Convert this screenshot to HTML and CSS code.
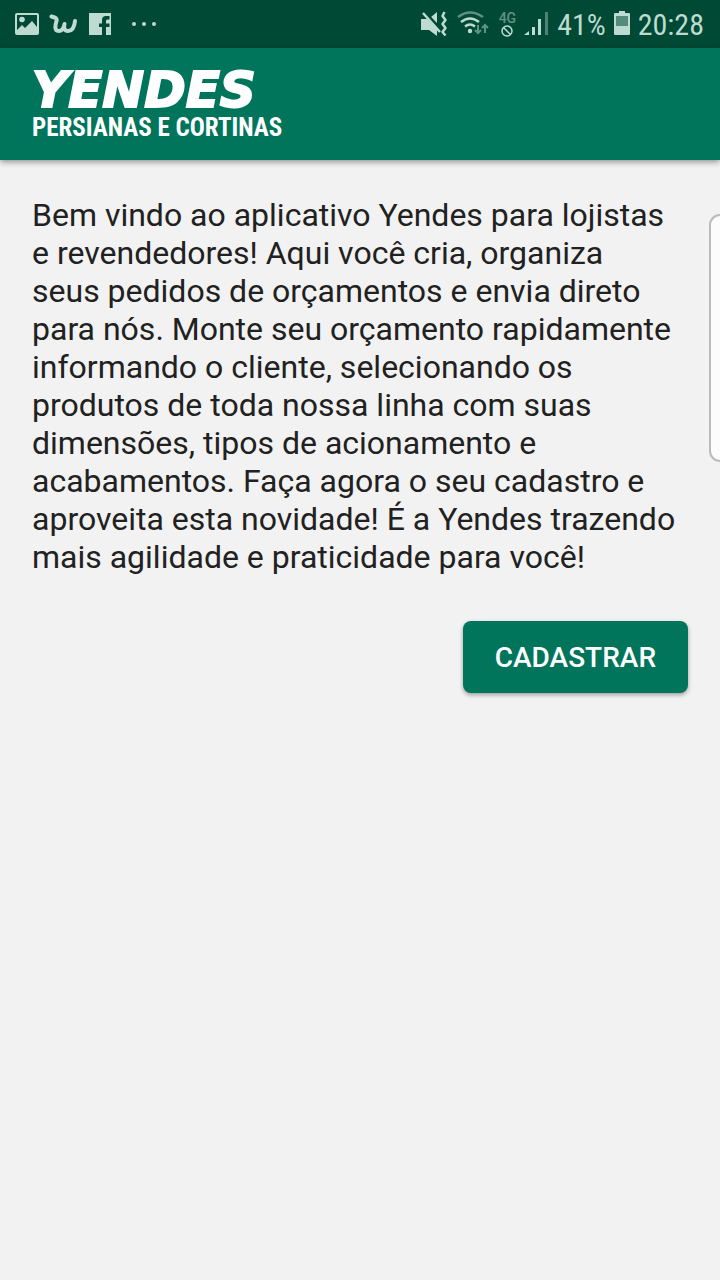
FILE: index.html
```html
<!DOCTYPE html>
<html lang="pt-BR">
<head>
<meta charset="utf-8">
<meta name="viewport" content="width=device-width, initial-scale=1">
<title>Yendes Persianas e Cortinas</title>
<link rel="stylesheet" href="styles.css">
</head>
<body>
<div class="status">
  <div class="notices">
    <svg width="24" height="24" viewBox="0 0 24 24" aria-hidden="true"><path fill="currentColor" fill-rule="evenodd" d="M2 1h20a2 2 0 0 1 2 2v18a2 2 0 0 1-2 2H2a2 2 0 0 1-2-2V3a2 2 0 0 1 2-2zM2 3v15l5-5 3 3 7-7 5 6V3z"/><circle cx="7" cy="7.500" r="2.800" fill="currentColor"/></svg>
    <svg width="30" height="24" viewBox="0 0 30 24" aria-hidden="true"><path d="M2.500 4.500c3 1 6 1 5 4.500-1.500 5-2 10 2 10 4 0 5.500-4 6-7-1 4 0 7 3.500 7 5 0 6.500-5 7-10" fill="none" stroke="currentColor" stroke-width="4" stroke-linecap="round" stroke-linejoin="round"/></svg>
    <svg width="22" height="24" viewBox="1 0 22 24" aria-hidden="true"><path fill="currentColor" d="M1 1h22v22h-5v-8h3.500v-3.500H18V9q0-1.500 1.500-1.500h2V4H18q-4 0-4 4v3.500h-3V15h3v8H1z"/></svg>
    <svg class="more" width="26" height="24" viewBox="0 0 26 24" fill="currentColor" aria-hidden="true"><circle cx="3" cy="12" r="2"/><circle cx="13" cy="12" r="2"/><circle cx="23" cy="12" r="2"/></svg>
  </div>
  <div class="system">
    <svg width="28" height="26" viewBox="0 0 28 26" aria-hidden="true"><path fill="currentColor" d="M0 8h6l10 10v7l-8-6H0zM10 6l6-5v11z"/><path d="M4 1l17 19" stroke="#004934" stroke-width="2"/><path d="M2 2l17 19" stroke="currentColor" stroke-width="2.500"/><path d="M23.500 1l-2 4 3 4-3 4 3 4-3 4 3 3.500" fill="none" stroke="currentColor" stroke-width="2.500" stroke-linejoin="round"/></svg>
    <svg width="34" height="26" viewBox="0 0 34 26" fill="none" stroke="currentColor" stroke-width="2.500" aria-hidden="true"><path opacity=".5" d="M1 6q12-9 25 0"/><path d="M4 11q9-7 18 0M8 15.500q5-4 10 0"/><circle cx="13" cy="20" r="2.200" fill="currentColor" stroke="none"/><g opacity=".5" stroke-width="2"><path d="M21 14v8M18 19l3 3 3-3M28 22v-8M25 17l3-3 3 3"/></g></svg>
    <span class="network"><span class="gen">4G</span><svg width="12" height="12" viewBox="0 0 12 12" fill="none" stroke="currentColor" stroke-width="1.500" aria-hidden="true"><circle cx="6" cy="6" r="5"/><path d="M2.500 2.500l7 7"/></svg></span>
    <svg width="25" height="26" viewBox="0 0 25 26" fill="currentColor" aria-hidden="true"><path d="M0 24l5-4v4zM8 16h3v8H8z"/><path opacity=".4" d="M21 1h3v23h-3z"/><path d="M14 8h3v16h-3z"/></svg>
    <span class="reading">41%</span>
    <svg width="16" height="26" viewBox="0 0 16 26" fill="currentColor" aria-hidden="true"><path opacity=".45" d="M2 4h12v11H2z"/><path fill-rule="evenodd" d="M5 0h6v2h4q1 0 1 1v20q0 1-1 1H1q-1 0-1-1V3q0-1 1-1h4zM2 5v10h12V5z"/></svg>
    <span class="reading">20:28</span>
  </div>
</div>
<header class="bar">
  <div class="brand"><span class="name">YENDES</span><span class="tagline">PERSIANAS E CORTINAS</span></div>
</header>
<main class="content">
  <p class="welcome">Bem vindo ao aplicativo Yendes para lojistas<br>e revendedores! Aqui você cria, organiza<br>seus pedidos de orçamentos e envia direto<br>para nós. Monte seu orçamento rapidamente<br>informando o cliente, selecionando os<br>produtos de toda nossa linha com suas<br>dimensões, tipos de acionamento e<br>acabamentos. Faça agora o seu cadastro e<br>aproveita esta novidade! É a Yendes trazendo<br>mais agilidade e praticidade para você!</p>
  <button class="register" type="button">CADASTRAR</button>
</main>
<div class="edge-handle"></div>
</body>
</html>
```
FILE: styles.css
```css
* {
  box-sizing: border-box;
}

body {
  margin: 0;
  min-height: 100vh;
  background: #f2f2f2;
  color: #212121;
  font-family: Roboto, sans-serif;
  overflow-x: hidden;
}

.status {
  display: flex;
  justify-content: space-between;
  align-items: center;
  height: 48px;
  padding: 0 16px 0 15px;
  background: #004934;
  color: #bddbd1;
}

.notices,
.system {
  display: flex;
  align-items: center;
}

.notices {
  gap: 10px;
}

.more {
  margin-left: 10px;
}

.system {
  gap: 8px;
}

.network {
  display: flex;
  flex-direction: column;
  align-items: center;
  gap: 1px;
}

.gen {
  font-size: 14px;
  line-height: 12px;
  font-weight: 500;
  opacity: 0.5;
}

.reading {
  font-family: "Roboto Condensed", Roboto, sans-serif;
  font-size: 30px;
  line-height: 48px;
  padding-top: 2px;
}

.bar {
  padding: 22px 32px 18px;
  background: #00755c;
  color: #fff;
  box-shadow: 0 2px 6px rgba(0, 0, 0, 0.4);
}

.brand {
  display: flex;
  flex-direction: column;
}

.name {
  font-family: "DejaVu Sans", sans-serif;
  font-size: 50px;
  line-height: 40px;
  font-weight: 700;
  font-style: italic;
  -webkit-text-stroke: 2px #fff;
}

.tagline {
  padding-top: 4px;
  font-family: "Roboto Condensed", Roboto, sans-serif;
  font-size: 25px;
  line-height: 28px;
  font-weight: 700;
}

.content {
  display: flex;
  flex-direction: column;
  gap: 45px;
  padding: 36px 32px;
}

.welcome {
  margin: 0;
  font-size: 32px;
  line-height: 38px;
  white-space: nowrap;
}

.register {
  align-self: flex-end;
  padding: 19px 32px 17px;
  border: 0;
  border-radius: 8px;
  background: #00755c;
  color: #fff;
  font-family: Roboto, sans-serif;
  font-size: 28px;
  line-height: 36px;
  font-weight: 500;
  box-shadow: 0 2px 4px rgba(0, 0, 0, 0.35);
}

.edge-handle {
  position: absolute;
  top: 214px;
  right: 0;
  width: 11px;
  height: 248px;
  border: 2px solid #bbb;
  border-right: 0;
  border-radius: 11px 0 0 11px;
  background: #fcfcfc;
}
```
